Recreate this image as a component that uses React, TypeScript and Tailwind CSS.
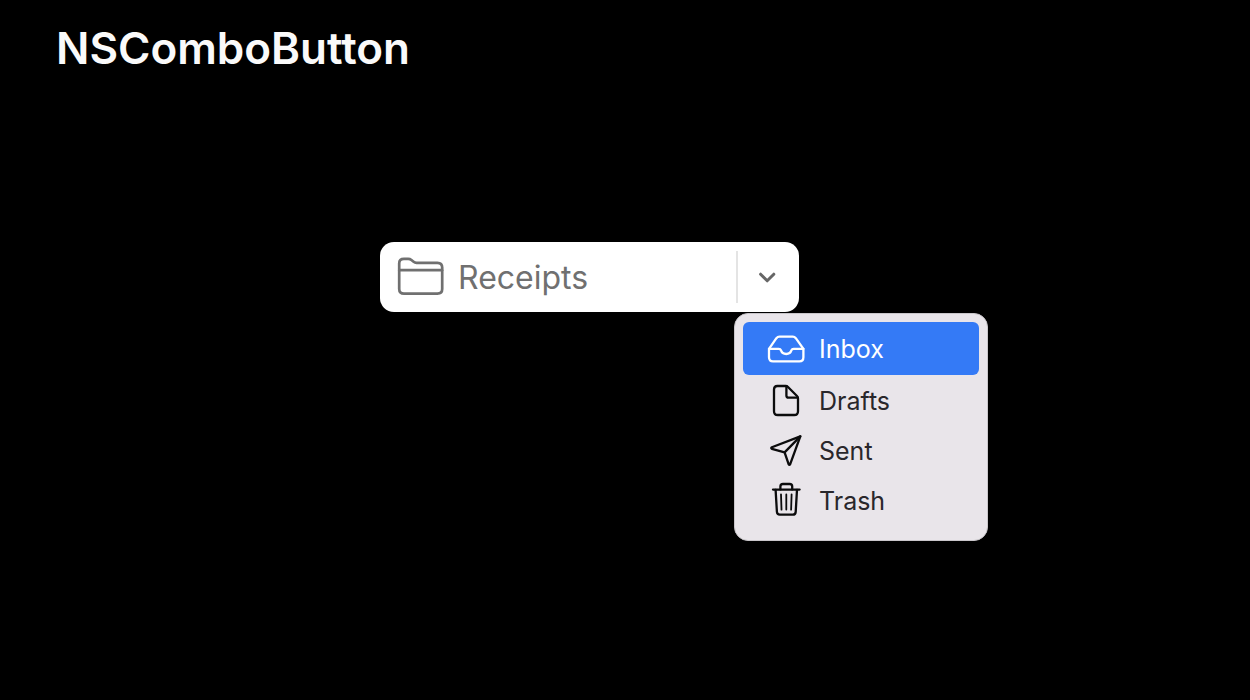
import { useState } from "react";
import type { ReactNode } from "react";

function Glyph({ children }: { children: ReactNode }) {
  return (
    <svg
      className="h-9 w-[38px] shrink-0"
      viewBox="0 0 38 36"
      fill="none"
      stroke="currentColor"
      strokeWidth="2.3"
      strokeLinecap="round"
      strokeLinejoin="round"
      aria-hidden="true"
    >
      {children}
    </svg>
  );
}

function InboxIcon() {
  return (
    <Glyph>
      <path d="M2 17.8 9.4 7.2Q10.6 5.7 12.4 5.7H25.8Q27.6 5.7 28.8 7.2L36.4 17.8V26.3Q36.4 30.4 32.4 30.4H6Q2 30.4 2 26.3Z" />
      <path d="M2 17.8H11.8Q13.4 17.8 13.9 19.2C14.6 21.4 16.6 23 19.2 23S23.8 21.4 24.5 19.2Q25 17.8 26.6 17.8H36.4" />
    </Glyph>
  );
}

function DraftIcon() {
  return (
    <Glyph>
      <path d="M10.4 4H18.6Q20 4 21 5L30 14Q31 15 31 16.4V29.2Q31 33 27.2 33H10.8Q7 33 7 29.2V7.6Q7 4 10.4 4Z" />
      <path d="M19.4 4.2V13.4Q19.4 15.6 21.6 15.6H30.8" />
    </Glyph>
  );
}

function SentIcon() {
  return (
    <Glyph>
      <path d="M33.3 4.4 4.9 15.2Q3.6 16 4.9 16.9L17.6 20.4 21.6 32.2Q22.4 33.6 23.2 32.2Z" />
      <path d="M33.3 4.4 17.6 20.4" />
    </Glyph>
  );
}

function TrashIcon() {
  return (
    <Glyph>
      <path d="M6 7.6H32.6" />
      <path d="M13.4 7.4V4.6Q13.4 2 16 2H22.6Q25.2 2 25.2 4.6V7.4" />
      <path d="M8.6 7.8 9.9 29.8Q10.1 32.6 12.8 32.6H25.8Q28.5 32.6 28.7 29.8L30 7.8" />
      <path strokeWidth="1.8" d="M14 12.4 14.5 27.6M19.3 12.4V27.6M24.6 12.4 24.1 27.6" />
    </Glyph>
  );
}

function FolderIcon() {
  return (
    <svg
      className="h-10 w-12 shrink-0"
      viewBox="0 0 48 40"
      fill="none"
      stroke="currentColor"
      strokeWidth="2.7"
      strokeLinecap="round"
      strokeLinejoin="round"
      aria-hidden="true"
    >
      <path d="M8 1.9H12.2Q14 1.9 15.4 3L17.6 4.8Q18.8 5.8 20.6 5.8H41.4Q46.2 5.8 46.2 10.5V32Q46.2 36.6 41.4 36.6H8Q3.2 36.6 3.2 32V6.5Q3.2 1.9 8 1.9Z" />
      <path d="M3.4 13.2H46" />
    </svg>
  );
}

const mailboxes = [
  { name: "Inbox", icon: <InboxIcon /> },
  { name: "Drafts", icon: <DraftIcon /> },
  { name: "Sent", icon: <SentIcon /> },
  { name: "Trash", icon: <TrashIcon /> },
];

export default function App() {
  const [open, setOpen] = useState(true);
  const [active, setActive] = useState("Inbox");

  return (
    <div className="min-h-screen bg-black font-['Inter',sans-serif]">
      <header className="px-14 pt-5">
        <h1 className="text-[44px] leading-14 font-semibold text-[#fafafa]">NSComboButton</h1>
      </header>

      <main className="pt-[166px] pl-[30.4%]">
        <div className="relative flex w-[419px] items-center rounded-[14px] bg-white text-[#707070]">
          <button type="button" className="flex h-[70px] flex-1 items-center gap-[14px] pl-4 text-left text-[32px]">
            <FolderIcon />
            <span className="pt-0.5">Receipts</span>
          </button>
          <span className="h-[52px] w-[2px] bg-[#e4e4e4]" />
          <button
            type="button"
            aria-label="Show mailboxes"
            aria-haspopup="menu"
            aria-expanded={open}
            onClick={() => setOpen(!open)}
            className="flex h-[70px] w-[61px] items-center justify-center"
          >
            <svg
              className="h-5 w-5"
              viewBox="0 0 20 20"
              fill="none"
              stroke="#666666"
              strokeWidth="3"
              strokeLinecap="round"
              strokeLinejoin="round"
              aria-hidden="true"
            >
              <path d="M1.6 7.2 8.2 13.8 14.8 7.2" />
            </svg>
          </button>

          {open && (
            <div
              role="menu"
              className="absolute top-full left-[354px] mt-px flex w-[254px] flex-col rounded-[14px] border border-[#c9c6ca] bg-[#e9e5ea] px-2 pt-2 pb-[15px]"
            >
              {mailboxes.map(({ name, icon }) => (
                <button
                  key={name}
                  type="button"
                  role="menuitem"
                  onMouseEnter={() => setActive(name)}
                  className={
                    active === name
                      ? "flex h-[53px] items-center gap-[14px] rounded-md bg-[#347af6] pl-6 text-left text-[25px] text-white"
                      : "flex h-[50px] items-center gap-[14px] rounded-md pl-6 text-left text-[25px] text-[#29272b]"
                  }
                >
                  <span className={active === name ? "text-white" : "text-[#0c0c0d]"}>{icon}</span>
                  <span className="pt-[3px]">{name}</span>
                </button>
              ))}
            </div>
          )}
        </div>
      </main>
    </div>
  );
}
